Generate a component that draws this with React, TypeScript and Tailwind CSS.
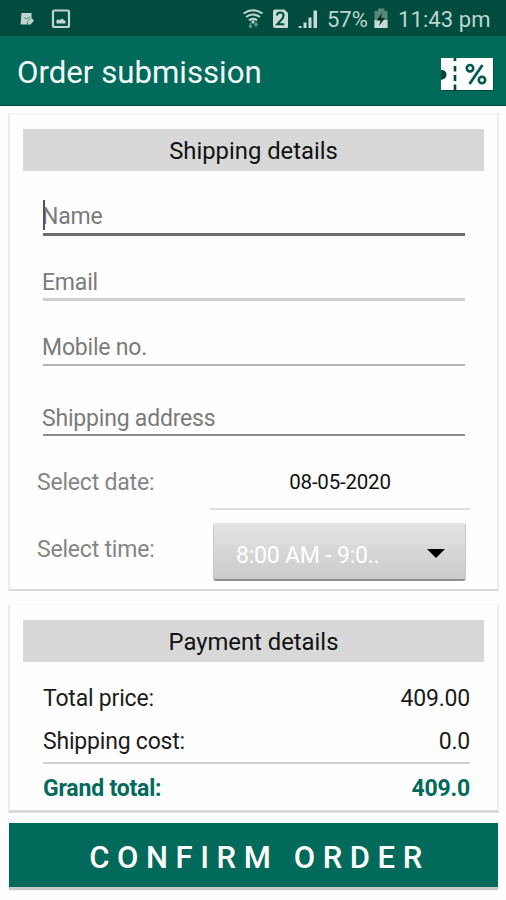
import React from "react";

function StatusIcons() {
  return (
    <svg width="86" height="22" viewBox="240 8 86 22" fill="none">
      <g stroke="#bfd5cf" strokeWidth="2.1">
        <path d="M243.5 13.5Q253 7 262.500 13.500" />
        <path d="M246 17Q253 12 260 17" />
        <path d="M249 20.300Q253 17.300 257 20.300" />
      </g>
      <path d="M253 20l2 2-2 2-2-2z" fill="#bfd5cf" />
      <path d="M250.500 23v4M248.800 25.500l1.700 2 1.700-2M256 27.500v-4M254.300 25l1.700-2 1.700 2" stroke="#6b9a8f" strokeWidth="1.2" />
      <path d="M275 9.500h9.500l3.500 3.500v14q0 1-1 1h-12q-2 0-2-2v-14.500q0-2 2-2z" fill="#c8dbd6" />
      <path d="M277 15.500q0-3 3.300-3t3.300 3q0 1.800-2 4l-4.300 4.700h7" stroke="#004d3f" strokeWidth="2" />
      <path d="M299 28v-2h2.500v2zM303.500 28v-5.500h3v5.500zM308.500 28v-10.500h3v10.500zM313.500 28v-17.500h3.500v17.500z" fill="#c8dbd6" />
      <circle cx="299.500" cy="27" r="1" fill="#c8dbd6" />
    </svg>
  );
}

function StatusBar() {
  return (
    <div className="flex h-[36px] bg-[#004d3f] text-[#bfd5cf]">
      <svg className="ml-[18px] mt-2 shrink-0" width="54" height="22" viewBox="18 8 54 22" fill="none">
        <path d="M21.500 13h10v5l2.500 2.500-3.500 4h-10z" fill="#bfd5cf" />
        <path d="M24 17.500l2 1.500 4-2M27.500 25v-3.500l3-3" stroke="#4e8275" strokeWidth="1" />
        <rect x="53" y="10.500" width="16" height="16.500" rx="1.500" stroke="#bfd5cf" strokeWidth="2.200" />
        <path d="M56.500 23.500v-3.500l2-.500 1.500.500 2-1.500 2 1.500 1.500 1v2.500z" fill="#bfd5cf" />
      </svg>
      <div className="ml-[168px] mt-2 shrink-0"><StatusIcons /></div>
      <span className="ml-[1px] mt-[7px] w-[43px] shrink-0 whitespace-nowrap text-[22px] leading-[25px]">57%</span>
      <svg className="ml-[2px] mt-2 shrink-0" width="18" height="22" viewBox="372 8 18 22" fill="none">
        <path d="M378 8.500h6.500v2.500h3v17h-13v-17h3.500z" fill="#56887c" />
        <path d="M374.500 20h13v8h-13z" fill="#c8dbd6" />
        <path d="M382.500 12.500l-6 8h4l-1.500 5.500 6-8h-4z" fill="#002f25" />
      </svg>
      <span className="ml-[8px] mt-[7px] shrink-0 whitespace-nowrap text-[22px] leading-[25px] tracking-[0.1px]">11:43 pm</span>
    </div>
  );
}

function CouponIcon() {
  return (
    <svg className="mt-[21px] shrink-0" width="54" height="34" viewBox="440 57 54 34" fill="none">
      <path d="M494 59v31.500h-51" stroke="#00483b" strokeWidth="1.500" />
      <path d="M441 58h52v32h-52v-10a5 5 0 0 0 0-10z" fill="#fefefe" />
      <path d="M441 70q5.500 0 5.500 4.500t-5.500 4.500" fill="#00483b" />
      <path d="M455 58v3M455 66v5.500M455 75v6M455 84.500v5.500" stroke="#00483b" strokeWidth="2.600" />
      <circle cx="470" cy="68.200" r="3.200" stroke="#00594a" strokeWidth="2.600" />
      <circle cx="482" cy="80" r="3.200" stroke="#00594a" strokeWidth="2.600" />
      <path d="M482.500 65l-13 19" stroke="#00594a" strokeWidth="2.700" />
    </svg>
  );
}

function SectionTitle({ children }: { children: React.ReactNode }) {
  return (
    <h2 className="mx-[13px] h-[42px] bg-[#d8d8d8] text-center text-[23.800px] leading-[44px] text-[#111]">
      {children}
    </h2>
  );
}

function Field({ label, className, focused }: { label: string; className: string; focused?: boolean }) {
  return (
    <div className={"relative ml-[33px] mr-[32px] flex items-end text-[23px] leading-[24px] tracking-[-0.200px] text-[#7b7b7b] " + className}>
      {focused && <span className="absolute bottom-[3px] left-0 h-[30px] w-[2px] bg-[#555]" />}
      <span className="-ml-px">{label}</span>
    </div>
  );
}

function PriceRow({ label, value, className }: { label: string; value: string; className: string }) {
  return (
    <div className={"ml-[33px] mr-[27px] flex items-end justify-between text-[23px] leading-[24px] tracking-[-0.200px] " + className}>
      <span>{label}</span>
      <span>{value}</span>
    </div>
  );
}

export default function App() {
  return (
    <div className="h-[900px] w-[506px] overflow-hidden bg-[#fefefe] font-['Roboto',sans-serif]">
      <StatusBar />
      <header className="flex h-[70px] justify-between border-b border-[#00483b] bg-[#016a5a] pl-[17px] pr-[12px]">
        <h1 className="mt-[19px] text-[31.200px] leading-[36px] text-[#f4fbf9]">Order submission</h1>
        <CouponIcon />
      </header>

      <section className="ml-[8px] mr-[7px] mt-[7px] h-[478px] border-x-2 border-t-2 border-b-2 border-x-[#ececec] border-b-[#d9d9d9] border-t-[#f5f5f5] pt-[14px]">
        <SectionTitle>Shipping details</SectionTitle>
        <Field label="Name" focused className="h-[65px] border-b-[3px] border-[#6e6e6e] pb-[4px]" />
        <Field label="Email" className="h-[65px] border-b-[3px] border-[#cfcfcf] pb-[3px]" />
        <Field label="Mobile no." className="h-[65px] border-b-2 border-[#b5b5b5] pb-[4px]" />
        <Field label="Shipping address" className="h-[70px] border-b-2 border-[#8b8b8b] pb-[3px]" />
        <div className="ml-[27px] mr-[27px] flex h-[74px] justify-between">
          <span className="mt-[35px] text-[23px] leading-[24px] tracking-[-0.200px] text-[#858585]">Select date:</span>
          <div className="w-[260px] border-b-2 border-[#dedede] pt-[34px] text-center text-[20.500px] leading-[24px] tracking-[-0.200px] text-[#111]">
            08-05-2020
          </div>
        </div>
        <div className="ml-[27px] mr-[31px] flex justify-between">
          <span className="mt-[28px] text-[23px] leading-[24px] tracking-[-0.200px] text-[#858585]">Select time:</span>
          <button className="mt-[13px] flex h-[58px] w-[253px] items-center justify-between rounded-[3px] border-x border-b-2 border-x-[#c9c9c9] border-b-[#8f8f8f] bg-linear-to-b from-[#e4e4e4] to-[#cbcbcb] pl-[22px] pr-[20px] text-[23px] leading-[24px] tracking-[-0.200px] text-white">
            <span className="mt-[10px]">8:00 AM - 9:0..</span>
            <span className="mt-[4px] border-x-[9px] border-t-[9px] border-x-transparent border-t-black" />
          </button>
        </div>
      </section>

      <section className="ml-[8px] mr-[7px] mt-[13px] h-[209px] border-x-2 border-t border-b-[3px] border-x-[#ececec] border-b-[#d9d9d9] border-t-[#fafafa] pt-[15px]">
        <SectionTitle>Payment details</SectionTitle>
        <PriceRow label="Total price:" value="409.00" className="h-[49px] text-[#1c1c1c]" />
        <PriceRow label="Shipping cost:" value="0.0" className="h-[53px] border-b-2 border-[#d0d0d0] pb-[8px] text-[#1c1c1c]" />
        <PriceRow label="Grand total:" value="409.0" className="h-[37px] font-bold text-[#016a5a]" />
      </section>

      <button className="ml-[9px] mt-[10px] block h-[64px] w-[489px] bg-[#016a5a] pl-[12px] text-center text-[31px] font-medium leading-[70px] tracking-[7.600px] text-white shadow-[0_3px_1px_#c9c9c9]">
        CONFIRM ORDER
      </button>
    </div>
  );
}
